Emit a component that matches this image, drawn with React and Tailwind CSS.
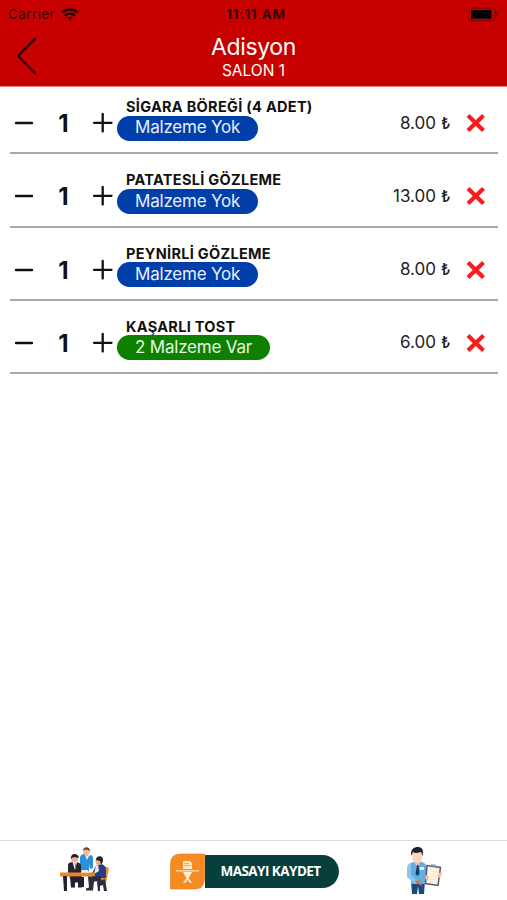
import React from "react";

const items = [
  { name: "SİGARA BÖREĞİ (4 ADET)", tag: "Malzeme Yok", price: "8.00" },
  { name: "PATATESLİ GÖZLEME", tag: "Malzeme Yok", price: "13.00" },
  { name: "PEYNİRLİ GÖZLEME", tag: "Malzeme Yok", price: "8.00" },
  { name: "KAŞARLI TOST", tag: "2 Malzeme Var", price: "6.00", extra: true },
];

function Wifi() {
  return (
    <svg className="ml-[6px] h-[13px] w-[18px]" viewBox="0 0 18 13" fill="none" stroke="#250000" strokeWidth="2.5">
      <path d="M1 4.6C5.5.3 12.500.3 17 4.6" />
      <path d="M4 7.700c2.900-2.700 7.100-2.700 10 0" />
      <path d="M6.200 9.600 9 12.500l2.800-2.900c-1.600-1.300-4-1.300-5.600 0Z" fill="#250000" stroke="none" />
    </svg>
  );
}

function Battery() {
  return (
    <svg className="h-[15px] w-[33px]" viewBox="0 0 33 15">
      <rect x="3" y="1" width="26" height="12.500" rx="2" fill="none" stroke="#8f0000" strokeWidth="1.300" />
      <path d="M29 3.500 33 7.300 29 11Z" fill="#8f0000" />
      <rect x="5" y="2.900" width="20.500" height="8.800" rx=".8" fill="#000" />
    </svg>
  );
}

function Item({ item }) {
  return (
    <li className="flex h-[73.33px] items-start border-b-2 border-[#a8a8a8]">
      <svg className="mt-[32px] ml-[4px] h-[20px] w-[20px]" viewBox="0 0 20 20" stroke="#111" strokeWidth="2.400" strokeLinecap="round">
        <path d="M2 10h16" />
      </svg>
      <span className="mt-[28px] ml-[14px] w-[31px] text-center text-[24px] leading-[30px] font-bold text-[#111]">1</span>
      <svg className="mt-[31px] ml-[13px] h-[22px] w-[22px]" viewBox="0 0 22 22" stroke="#111" strokeWidth="2.300" strokeLinecap="round">
        <path d="M2 10.800h17.500M10.700 2v17.500" />
      </svg>
      <div className="ml-[3px] flex flex-1 flex-col items-start">
        <span className="mt-[17px] ml-[9px] h-[17.500px] text-[14.500px] leading-[18px] font-bold tracking-[0.300px] whitespace-nowrap text-[#111]">{item.name}</span>
        <span className={item.extra
          ? "flex h-[25px] w-[153px] items-center rounded-full bg-[#0e8000] pl-[18px] text-[17px] tracking-[-0.200px] whitespace-nowrap text-[#e8f7e5]"
          : "flex h-[25px] w-[141px] items-center rounded-full bg-[#003faa] pl-[18px] text-[17px] tracking-[-0.200px] whitespace-nowrap text-[#e6efff]"}>
          {item.tag}
        </span>
      </div>
      <span className="mt-[31.500px] text-[17px] leading-[21px] whitespace-nowrap text-[#222]">{item.price}</span>
      <span className="mt-[31.500px] ml-[5px] w-[10px] text-[15.500px] leading-[21px] font-medium text-[#222]">₺</span>
      <svg className="mt-[31px] mr-[12px] ml-[15px] h-[22px] w-[20px]" viewBox="0 0 20 22" stroke="#fb1b1b" strokeWidth="4.200" strokeLinecap="butt">
        <path d="M2 3.500l15.500 15M17.500 3.500 2 18.500" />
      </svg>
    </li>
  );
}

function MeetingIcon() {
  return (
    <svg className="h-[46px] w-[52px]" viewBox="0 0 52 46">
      <rect x="10" y="18" width="12" height="14" rx="2" fill="#ef8a35" />
      <path d="M41 20h7c2 0 2 3 1 6l-2 10h-8Z" fill="#f08a32" />
      <path d="M21 19V11q0-4 5-4l4 2 2-1q2 0 2 4v9l-3 1-1-5v8h-8Z" fill="#2b91d5" />
      <path d="m26 8 2 5 2-4" fill="#dff2fd" />
      <circle cx="27.500" cy="4.700" r="3.300" fill="#f6b993" />
      <path d="M24 4c0-5 7-5 7 0-2-1-5-2-7 0Z" fill="#664037" />
      <path d="M9 29V18q0-3 6-3t7 3v12Z" fill="#252532" />
      <path d="m13.500 15 2.500 8 2-8" fill="#fff" />
      <path d="m16 16 1 6" stroke="#d84638" />
      <circle cx="15.500" cy="12" r="3.500" fill="#f5b38b" />
      <path d="M12 12c-1-6 7-7 8-1-3 0-5-2-8 1Z" fill="#241b23" />
      <path d="M32 28l5-9q2-3 5-2 5 1 5 6v8H34Z" fill="#263d82" />
      <path d="m37 19 2-2 1 7-5 3" fill="#e6eefb" />
      <circle cx="40" cy="14.500" r="3.500" fill="#f0ac83" />
      <path d="M37 13c0-5 8-5 7 1l-2 4-1-4Z" fill="#252029" />
      <path d="M1 25.500h35v4H1Z" fill="#e98727" />
      <path d="M23 23h6l1 2.500h-8Z" fill="#eee" />
      <path d="M4 29h4v15H5ZM11 29.500h12v11h-4v-5h-3v5h-4ZM23 30h2v10h-2Z" fill="#22232d" />
      <path d="M29 29.500h13v5h-7l-1 9h-7v-2l3-1ZM38 35l8-3 2 12h-3l-1-6-3 1v5h-2Z" fill="#292d3c" />
    </svg>
  );
}

function WaiterIcon() {
  return (
    <svg className="h-[48px] w-[37px]" viewBox="0 0 37 48">
      <path d="M5 34h14l-1 13h-5l-1-8-1 8H6Z" fill="#164b7b" />
      <path d="M1 21q1-5 7-6h8q4 1 5 6l3 2v6l-5-1v9H5v-5l-4-2Z" fill="#65ace0" />
      <path d="M1 21q1-5 4-5v12l6 5-2 4-8-7Z" fill="#8dc5ee" />
      <path d="M9 13h5v4l-2.500 3L9 17Z" fill="#f6b99b" />
      <path d="m11 18 1.500.1 1 9-2 2-2-2Z" fill="#163e6a" />
      <path d="M6.300 6h10v5q-1 5-5 5t-5-5Z" fill="#ffd3b7" />
      <path d="M5.500 9C4 2 8 0 12 0s6 3 4.500 9L15 5Q9 7 7 5Z" fill="#242027" />
      <path d="M14 20h4v3h-4Z" fill="#d9effc" />
      <path d="m9 33 5 1 2 5-6-3Z" fill="#ce7552" />
      <path d="M21 18.500 34.500 20.500 32 38.500 19.500 36.500Z" fill="#fff0df" stroke="#525e6d" strokeWidth="1.500" />
      <path d="m25 17 5 .7-.3 2-5-.7Z" fill="#8fa7bb" />
      <path d="m24 24 7 1m-7 3 6 1m-7 3 6 1" stroke="#fce5d1" />
      <path d="m33 26 3-1-1 5-3 1ZM20 28l3 1-1 4-3-1Z" fill="#f5ba92" />
    </svg>
  );
}

function SaveButton() {
  return (
    <button className="mt-[12px] ml-px flex h-[36px] w-[169px] items-start">
      <svg className="h-[37px] w-[35px] shrink-0" viewBox="0 0 35 37">
        <path d="M.5 36V11Q.5 1 10.500 1h24v25q0 10-10 10Z" fill="#f68b21" stroke="#df8730" strokeWidth=".7" />
        <path d="M13 8h7l2 2v6h-9Z" fill="#ffe7c6" />
        <path d="M14 10.500h5m-5 2h7" stroke="#eca55b" strokeWidth=".8" />
        <path d="M6 17.800h23" stroke="#ffe0b8" strokeWidth="1.400" />
        <path d="M13 19h9l-3.500 6.500 3.500 4-2 .5-2.500-3-2.500 3-2-.5 3.500-4Z" fill="#fff0dc" />
      </svg>
      <span className="mt-[1.500px] flex h-[33.500px] flex-1 items-center rounded-r-full bg-[#073f3c] pl-[16px] font-['Open_Sans',sans-serif] text-[13.500px] font-bold tracking-[-0.550px] whitespace-nowrap text-white">MASAYI KAYDET</span>
    </button>
  );
}

export default function App() {
  return (
    <div className="flex h-[900px] w-[507px] flex-col overflow-hidden bg-white font-['Inter',sans-serif]">
      <header className="z-10 h-[87px] shrink-0 border-b border-[#e77f7f] bg-[#c70000]">
        <div className="grid h-[28px] grid-cols-3 items-center px-[8px]">
          <div className="flex items-center text-[13.500px] tracking-[0.400px] text-[#3c0000]">Carrier<Wifi /></div>
          <span className="pl-[5px] text-center text-[13.500px] font-semibold tracking-[0.850px] whitespace-nowrap text-[#250000]">11:11 AM</span>
          <div className="flex justify-end"><Battery /></div>
        </div>
        <div className="grid grid-cols-[60px_1fr_60px]">
          <svg className="mt-[8px] ml-[15px] h-[40px] w-[24px]" viewBox="0 0 24 40" fill="none" stroke="#260000" strokeWidth="2.200" strokeLinecap="round">
            <path d="M20 3 3 20l17 17" />
          </svg>
          <div className="flex flex-col items-center text-white">
            <h1 className="mt-[4px] text-[23px] leading-[30px] font-normal tracking-[-0.350px]">Adisyon</h1>
            <span className="text-[15.500px] leading-[18px]">SALON 1</span>
          </div>
        </div>
      </header>
      <ul className="-mt-[6px] flex-1 pr-[9px] pl-[10px]">
        {items.map((item) => <Item key={item.name} item={item} />)}
      </ul>
      <footer className="grid h-[60px] shrink-0 grid-cols-3 justify-items-center border-t border-[#dedede]">
        <div className="pt-[6px] pl-px"><MeetingIcon /></div>
        <SaveButton />
        <div className="pt-[5.500px] pl-[4px]"><WaiterIcon /></div>
      </footer>
    </div>
  );
}
